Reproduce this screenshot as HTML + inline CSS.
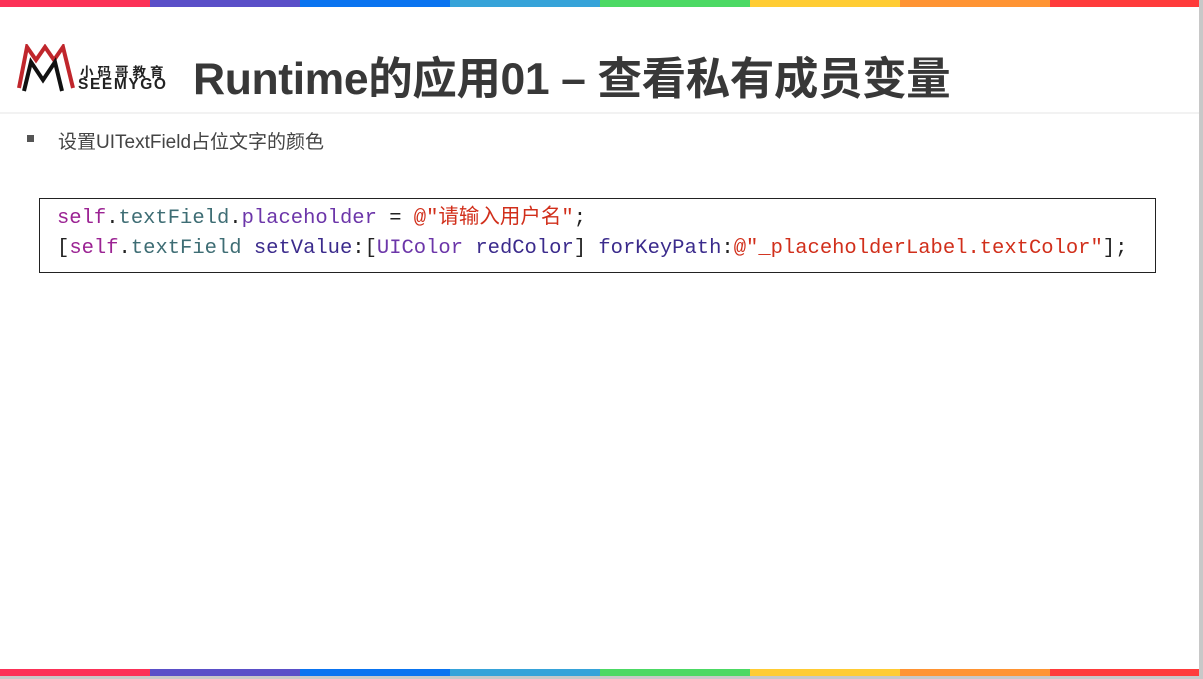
<!DOCTYPE html>
<html><head><meta charset="utf-8"><style>
body{margin:0;width:1203px;height:679px;background:#c8c8c8;overflow:hidden;position:relative;font-family:"Liberation Sans","Noto Sans CJK SC",sans-serif}
.page{position:absolute;left:0;top:0;width:1199px;height:676px;background:#fff}
.bar{position:absolute;left:0;width:1199px;height:7px;display:flex}
.bar div{width:150px;height:100%}
.sep{position:absolute;left:0;top:112px;width:1199px;height:2px;background:#f2f2f2}
.title{position:absolute;left:193px;top:42px;font-size:44.5px;font-weight:bold;color:#383838;letter-spacing:-0.4px;white-space:nowrap}
.bullet{position:absolute;left:27px;top:135px;width:7px;height:7px;background:#555}
.sub{position:absolute;left:58px;top:127px;font-size:19px;color:#444}
.code{position:absolute;left:39px;top:198px;width:1117px;height:75px;border:1px solid #222;box-sizing:border-box;font-family:"Liberation Mono","Noto Sans CJK SC",monospace;font-size:20.5px;line-height:30px;padding:5px 0 0 17px;white-space:pre;color:#222}
.k{color:#9b2393}.t{color:#3e6d74}.p{color:#6c36a9}.s{color:#d12f1b}.m{color:#3b2b8c}
</style></head><body>
<div class="page">
<div class="bar" style="top:0"><div style="background:#fc3157"></div><div style="background:#5a4fc8"></div><div style="background:#0a74f0"></div><div style="background:#36a3d9"></div><div style="background:#4cd964"></div><div style="background:#ffcc33"></div><div style="background:#ff9433"></div><div style="background:#ff3b3b;width:149px"></div></div>
<svg style="position:absolute;left:17px;top:44px" width="62" height="48" viewBox="0 0 62 48">
<polyline points="2,44 10,3 19,16 28,3 37,16 46,3 56,44" fill="none" stroke="#c0262c" stroke-width="4"/>
<polyline points="7,47 14,18 26,36 38,18 45,47" fill="none" stroke="#111" stroke-width="4"/>
</svg>
<div style="position:absolute;left:80px;top:61px;font-size:13.5px;font-weight:bold;color:#222;letter-spacing:4px">小码哥教育</div>
<div style="position:absolute;left:78px;top:76px;font-size:15.5px;font-weight:bold;color:#222;letter-spacing:1.6px">SEEMYGO</div>
<div class="title">Runtime的应用01 – 查看私有成员变量</div>
<div class="sep"></div>
<div class="bullet"></div>
<div class="sub">设置UITextField占位文字的颜色</div>
<div class="code"><span class="k">self</span>.<span class="t">textField</span>.<span class="p">placeholder</span> = <span class="s">@"请输入用户名"</span>;
[<span class="k">self</span>.<span class="t">textField</span> <span class="m">setValue</span>:[<span class="p">UIColor</span> <span class="m">redColor</span>] <span class="m">forKeyPath</span>:<span class="s">@"_placeholderLabel.textColor"</span>];</div>
<div class="bar" style="top:669px"><div style="background:#fc3157"></div><div style="background:#5a4fc8"></div><div style="background:#0a74f0"></div><div style="background:#36a3d9"></div><div style="background:#4cd964"></div><div style="background:#ffcc33"></div><div style="background:#ff9433"></div><div style="background:#ff3b3b;width:149px"></div></div>
</div>
</body></html>
